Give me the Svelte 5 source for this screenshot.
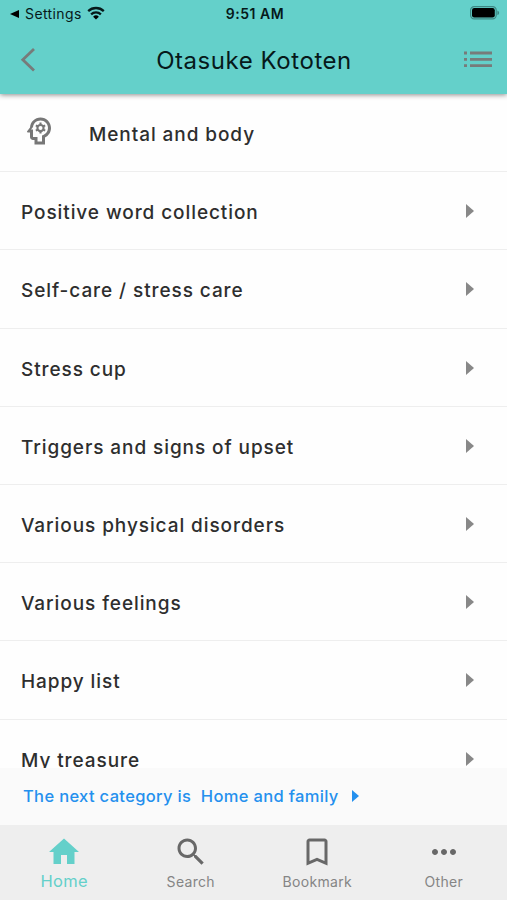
<script lang="ts">
	const topics = [
		"Positive word collection",
		"Self-care / stress care",
		"Stress cup",
		"Triggers and signs of upset",
		"Various physical disorders",
		"Various feelings",
		"Happy list",
		"My treasure",
	];

	const tabs = ["Home", "Search", "Bookmark", "Other"];

	let activeTab = $state("Home");
</script>

<div class="app">
	<header class="header">
		<div class="status">
			<div class="status-left">
				<svg class="status-back" viewBox="0 0 10 8"><path d="M0 4 9 0v8z" /></svg>
				<span class="status-app">Settings</span>
				<svg class="status-wifi" viewBox="0 0 18 14">
					<path class="wave" d="M1.2 5.1a11.3 11.3 0 0 1 15.6 0M4.1 8.3a7.1 7.1 0 0 1 9.8 0" />
					<path d="M9 13.6 6.1 10.7a4.2 4.2 0 0 1 5.8 0z" />
				</svg>
			</div>
			<span class="status-time">9:51 AM</span>
			<svg class="status-battery" viewBox="0 0 30 14">
				<rect class="battery-shell" x=".6" y=".6" width="25.6" height="12.3" rx="3.6" />
				<rect x="2" y="2" width="22.8" height="9.5" rx="2.2" />
				<path class="battery-tip" d="M27.4 4.4c2.3.9 2.3 3.8 0 4.7z" />
			</svg>
		</div>
		<div class="bar">
			<button class="bar-button" aria-label="Back">
				<svg class="icon-back" viewBox="0 0 16 26"><path d="M14 2 2.8 12.8 14 23.6" /></svg>
			</button>
			<h1 class="bar-title">Otasuke Kototen</h1>
			<button class="bar-button" aria-label="Menu">
				<svg class="icon-menu" viewBox="0 0 28 17">
					<path d="M0 2h3M6 2h22M0 8.4h3M6 8.4h22M0 14.6h3M6 14.6h22" />
				</svg>
			</button>
		</div>
	</header>

	<main class="content">
		<div class="row category">
			<svg class="category-icon" viewBox="0 0 24 24">
				<path fill-rule="evenodd" d="M13 3C9.25 3 6.2 5.94 6.02 9.64L4.1 12.2c-.25.33-.01.8.4.8H6v3c0 1.1.9 2 2 2h1v3h7v-4.68c2.36-1.12 4-3.53 4-6.32 0-3.87-3.13-7-7-7zm1.88 11.63-.88.42V19h-3v-3H8v-5H6.7L8 9.3C8.3 6.9 10.4 5 13 5c2.76 0 5 2.24 5 5 0 2.09-1.29 3.88-3.12 4.63z" />
				<circle class="gear" cx="13" cy="10" r="2.05" />
				<path class="gear-teeth" d="M13 6.4v1.5M13 12.1v1.5M9.9 8.2l1.3.75M14.8 11.05l1.3.75M9.9 11.8l1.3-.75M14.8 8.95l1.3-.75" />
			</svg>
			<span>Mental and body</span>
		</div>
		{#each topics as topic}
			<button class="row">
				<span>{topic}</span>
				<svg class="row-arrow" viewBox="0 0 8 14"><path d="M0 0 8 7 0 14z" /></svg>
			</button>
		{/each}
	</main>

	<button class="next">
		<span>The next category is&nbsp; Home and family</span>
		<svg class="next-arrow" viewBox="0 0 7 12"><path d="M0 0 7 6 0 12z" /></svg>
	</button>

	<nav class="tabs">
		{#each tabs as tab}
			<button class="tab" class:active={activeTab === tab} onclick={() => activeTab = tab}>
				<svg class="tab-icon" viewBox="0 0 24 24">
					{#if tab === "Home"}
						<path d="M10 20v-6h4v6h5v-8h3L12 3 2 12h3v8z" />
					{:else if tab === "Search"}
						<path d="M15.5 14h-.79l-.28-.27C15.41 12.59 16 11.11 16 9.5 16 5.91 13.09 3 9.5 3S3 5.91 3 9.5 5.91 16 9.5 16c1.61 0 3.09-.59 4.23-1.57l.27.28v.79l5 4.99L20.49 19l-4.99-5zm-6 0C7.01 14 5 11.99 5 9.5S7.01 5 9.5 5 14 7.01 14 9.5 11.99 14 9.5 14z" />
					{:else if tab === "Bookmark"}
						<path d="M17 3H7c-1.1 0-1.99.9-1.99 2L5 21l7-3 7 3V5c0-1.1-.9-2-2-2zm0 15-5-2.18L7 18V5h10v13z" />
					{:else}
						<path d="M6 10c-1.1 0-2 .9-2 2s.9 2 2 2 2-.9 2-2-.9-2-2-2zm12 0c-1.1 0-2 .9-2 2s.9 2 2 2 2-.9 2-2-.9-2-2-2zm-6 0c-1.1 0-2 .9-2 2s.9 2 2 2 2-.9 2-2-.9-2-2-2z" />
					{/if}
				</svg>
				<span class="tab-label">{tab}</span>
			</button>
		{/each}
	</nav>
</div>

<style>
	:global(body) {
		margin: 0;
	}

	.app {
		background: #fefefe;
		color: #2e2e2e;
		display: flex;
		flex-direction: column;
		font-family: Inter, "Liberation Sans", sans-serif;
		height: 900px;
		overflow: hidden;
		width: 507px;
	}

	button {
		background: none;
		border: none;
		color: inherit;
		cursor: pointer;
		font: inherit;
		letter-spacing: inherit;
		padding: 0;
	}

	svg {
		display: block;
		flex: none;
	}

	.header {
		background: #64d0ca;
		box-shadow: 0 1px 5px rgba(0, 0, 0, .45);
		color: #06191a;
		flex: none;
		height: 94px;
		z-index: 1;
	}

	.status {
		align-items: center;
		display: grid;
		grid-template-columns: 1fr auto 1fr;
		height: 27px;
		padding: 0 7px 0 10px;
	}

	.status-left {
		align-items: center;
		display: flex;
	}

	.status-back {
		height: 8px;
		width: 10px;
	}

	.status-app {
		font-size: 14px;
		letter-spacing: .4px;
		margin-left: 5px;
	}

	.status-wifi {
		height: 14px;
		margin: -1px 0 0 5px;
		width: 18px;
	}

	.wave {
		fill: none;
		stroke: #06191a;
		stroke-width: 2.3;
	}

	.status-time {
		font-size: 14px;
		font-weight: 600;
		letter-spacing: .5px;
	}

	.status-battery {
		height: 14px;
		justify-self: end;
		margin-top: -1px;
		width: 30px;
	}

	.battery-shell {
		fill: none;
		stroke: #3d8884;
		stroke-width: 1.2;
	}

	.battery-tip {
		fill: #3d8884;
	}

	.bar {
		align-items: center;
		display: grid;
		grid-template-columns: 1fr auto 1fr;
		height: 65px;
		padding: 0 15px 0 20px;
	}

	.bar-button {
		justify-self: start;
		stroke: #777b7a;
	}

	.bar-button:last-child {
		justify-self: end;
	}

	.icon-back {
		fill: none;
		height: 26px;
		stroke-width: 2.8;
		width: 16px;
	}

	.icon-menu {
		height: 17px;
		stroke-width: 2.8;
		width: 28px;
	}

	.bar-title {
		font-size: 24px;
		font-weight: 400;
		letter-spacing: .55px;
		margin: 0;
		padding: 1px 4px 0 0;
	}

	.content {
		flex: 1;
		min-height: 0;
		overflow: hidden;
	}

	.row {
		align-items: center;
		border-bottom: 1px solid #eee;
		box-sizing: border-box;
		display: flex;
		font-size: 19px;
		font-weight: 500;
		height: 78.2px;
		justify-content: space-between;
		letter-spacing: .92px;
		padding: 4px 33px 0 21px;
		text-align: left;
		width: 100%;
	}

	.category {
		gap: 32px;
		justify-content: flex-start;
	}

	.category-icon {
		fill: #777;
		height: 36px;
		margin-top: -7px;
		width: 36px;
	}

	.gear, .gear-teeth {
		fill: none;
		stroke: #777;
		stroke-width: 1.4;
	}

	.row-arrow {
		fill: #888;
		height: 14px;
		margin-top: -3px;
		width: 8px;
	}

	.next {
		align-items: center;
		background: #fafafa;
		color: #2490ee;
		display: flex;
		flex: none;
		font-size: 16.5px;
		font-weight: 500;
		height: 57px;
		letter-spacing: .34px;
		padding: 0 23px 1px;
	}

	.next-arrow {
		fill: #2490ee;
		height: 12px;
		margin-left: 13px;
		width: 7px;
	}

	.tabs {
		background: #eee;
		display: flex;
		flex: none;
		height: 75px;
	}

	.tab {
		align-items: center;
		color: #858585;
		display: flex;
		flex: 1;
		flex-direction: column;
		font-size: 14px;
		letter-spacing: .3px;
		padding-top: 9px;
	}

	.tab-icon {
		fill: #686868;
		height: 36px;
		width: 36px;
	}

	.tab-label {
		line-height: 20px;
		margin-top: 2px;
	}

	.active {
		color: #64d0ca;
		font-size: 16.5px;
		padding-left: 1px;
	}

	.active .tab-icon {
		fill: #64d0ca;
	}

	.active .tab-label {
		margin-top: 1px;
	}
</style>
